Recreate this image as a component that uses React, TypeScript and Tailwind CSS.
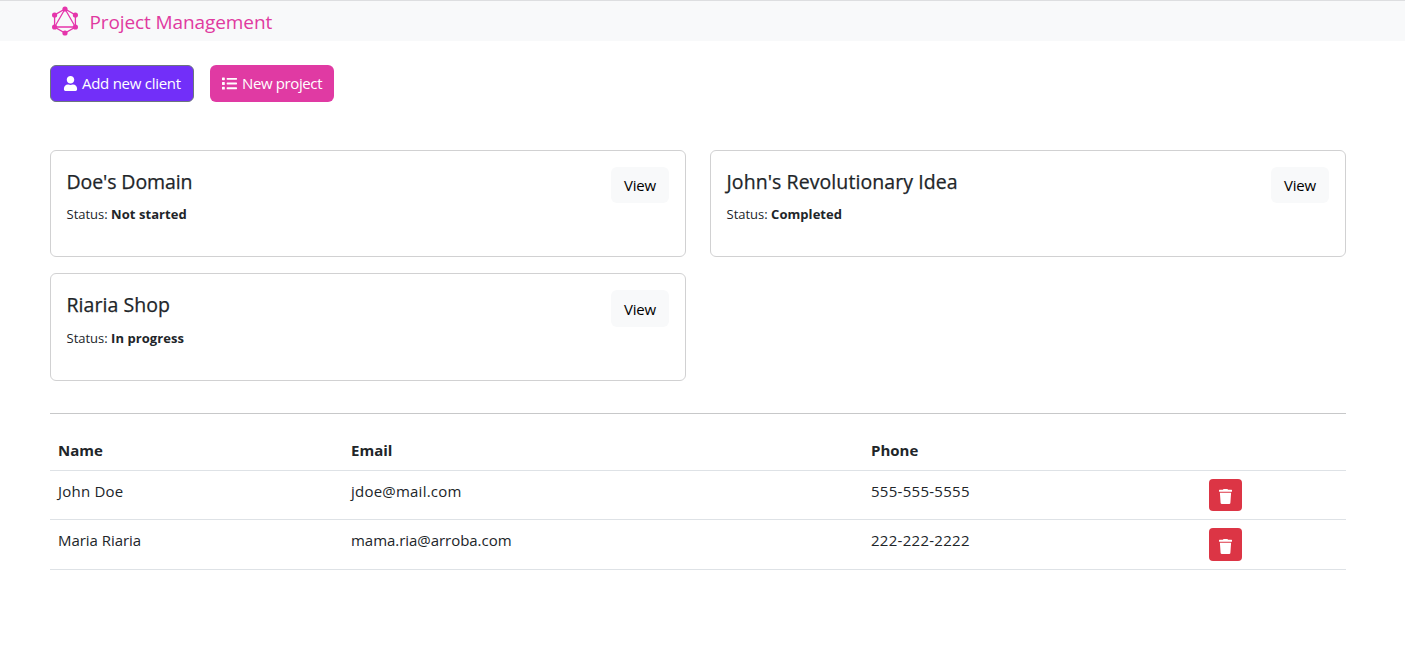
import { FaUser, FaList } from "react-icons/fa";

type Project = { name: string; status: string; spacing: string; offset: string; button: string };
type Client = { name: string; email: string; phone: string; spacing: string; button: string };

const projects: Project[] = [
  { name: "Doe's Domain", status: "Not started", spacing: "tracking-[-0.1px]", offset: "mt-[7px]", button: "h-9" },
  { name: "John's Revolutionary Idea", status: "Completed", spacing: "tracking-[0.08px]", offset: "mt-[7px]", button: "h-9" },
  { name: "Riaria Shop", status: "In progress", spacing: "tracking-[0.05px]", offset: "mt-2", button: "h-[37px]" },
];

const clients: Client[] = [
  { name: "John Doe", email: "jdoe@mail.com", phone: "555-555-5555", spacing: "tracking-[0.22px]", button: "h-8 pt-[3px]" },
  { name: "Maria Riaria", email: "mama.ria@arroba.com", phone: "222-222-2222", spacing: "tracking-[-0.04px]", button: "h-[33px] pt-1" },
];

function Logo() {
  return (
    <svg viewBox="0 0 30 30" className="h-[30px] w-[30px] shrink-0" fill="none" stroke="#e535ab" strokeWidth="1.3">
      <path d="M15 3 25.4 9v12L15 27 4.6 21V9Z" />
      <path d="M15 3 25.4 21H4.6Z" />
      <g fill="#e535ab" stroke="none">
        <circle cx="15" cy="3" r="2.6" />
        <circle cx="25.4" cy="9" r="2.6" />
        <circle cx="25.4" cy="21" r="2.6" />
        <circle cx="15" cy="27" r="2.6" />
        <circle cx="4.6" cy="21" r="2.6" />
        <circle cx="4.6" cy="9" r="2.6" />
      </g>
    </svg>
  );
}

function TrashIcon() {
  return (
    <svg viewBox="0 0 13 15" className="h-[15px] w-[13px]" fill="currentColor">
      <path d="M4 .8 4.5 0h4l.5.8h3.5a.5.5 0 0 1 .5.5v1a.5.5 0 0 1-.5.5H.5a.5.5 0 0 1-.5-.5v-1A.5.5 0 0 1 .5.8Z" />
      <path d="M.9 3.7h11.2l-.7 10a1.3 1.3 0 0 1-1.3 1.3H2.9a1.3 1.3 0 0 1-1.3-1.3Z" />
    </svg>
  );
}

function ProjectCard({ project }: { project: Project }) {
  return (
    <article className="flex items-start justify-between rounded-md border border-[#d1d1d2] py-4 pr-4 pl-[15.5px]">
      <div>
        <h5 className={"text-[19.5px] leading-[30px] font-medium whitespace-nowrap [-webkit-text-stroke:0.25px] " + project.spacing}>
          {project.name}
        </h5>
        <p className={"text-[13px] leading-5 whitespace-nowrap " + project.offset}>
          Status: <strong className="font-bold tracking-[0.05px]">{project.status}</strong>
        </p>
      </div>
      <button className={"w-[58px] rounded-md bg-[#f8f9fa] text-[15px] leading-9 tracking-[-0.2px] text-black " + project.button}>View</button>
    </article>
  );
}

export default function App() {
  return (
    <div className="min-h-[647px] bg-white font-['Open_Sans','Noto_Sans',sans-serif] text-[#212529]">
      <nav className="flex h-[41px] items-center border-t border-[#dddee0] bg-[#f8f9fa] pl-[50px]">
        <Logo />
        <span className="mt-0.5 ml-[9.5px] text-[19px] tracking-[-0.1px] whitespace-nowrap text-[#e03aa0]">Project Management</span>
      </nav>
      <main className="pt-6 pr-[59px] pl-[50px]">
        <div className="flex gap-4 text-[15px] text-white">
          <button className="flex h-[37px] w-[144px] items-center rounded-md border border-[#6c757d] bg-[#722ff9] pl-3 tracking-[-0.27px] whitespace-nowrap">
            <FaUser className="mr-[4px] size-[15px]" />
            <span>Add new client</span>
          </button>
          <button className="flex h-[37px] w-[124px] items-center rounded-md bg-[#e03aa3] pl-3 tracking-[-0.38px] whitespace-nowrap">
            <FaList className="mr-[5px] size-[15px]" />
            <span>New project</span>
          </button>
        </div>
        <section className="mt-12 grid grid-cols-2 grid-rows-[107px_108px] gap-x-6 gap-y-4">
          {projects.map((p) => (
            <ProjectCard key={p.name} project={p} />
          ))}
        </section>
        <hr className="mt-8 border-[#c7c8c9]" />
        <table className="mt-4 w-full table-fixed text-left text-[15px] leading-6">
          <colgroup>
            <col className="w-[293px]" />
            <col className="w-[520px]" />
            <col className="w-[338px]" />
            <col />
          </colgroup>
          <thead>
            <tr className="h-10 border-b border-[#dee2e6]">
              <th className="px-2 pt-px font-bold">Name</th>
              <th className="px-2 pt-px font-bold">Email</th>
              <th className="px-2 pt-px font-bold">Phone</th>
              <th />
            </tr>
          </thead>
          <tbody>
            {clients.map((c) => (
              <tr key={c.name} className="h-[49px] border-b border-[#dee2e6] align-top">
                <td className={"px-2 pt-2 " + c.spacing}>{c.name}</td>
                <td className={"px-2 pt-2 " + c.spacing}>{c.email}</td>
                <td className="px-2 pt-2 tracking-[0.28px]">{c.phone}</td>
                <td className="px-2 py-2">
                  <button className={"flex w-[33px] items-center justify-center rounded bg-[#dc3545] text-white " + c.button}>
                    <TrashIcon />
                  </button>
                </td>
              </tr>
            ))}
          </tbody>
        </table>
      </main>
    </div>
  );
}
